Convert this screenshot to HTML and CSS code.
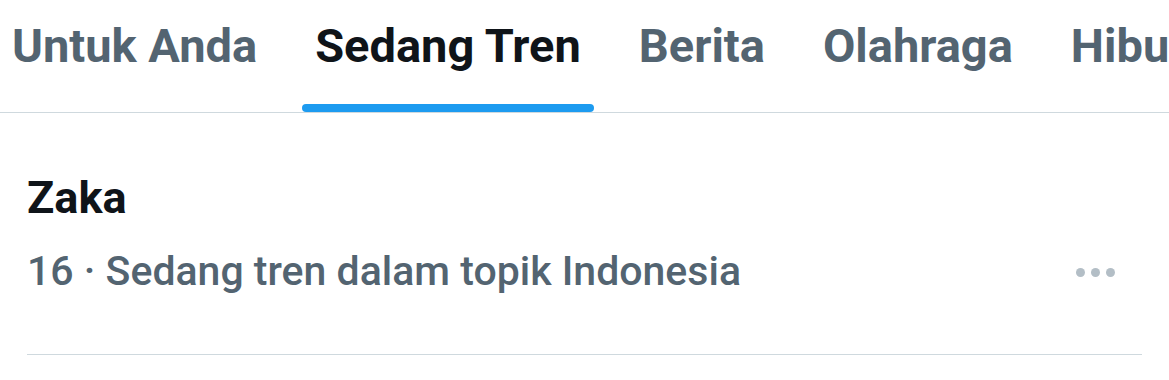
FILE: index.html
```html
<!DOCTYPE html>
<html lang="id">
<head>
    <meta charset="UTF-8">
    <meta name="viewport" content="width=device-width, initial-scale=1.0">
    <title>Jelajahi</title>
    <link rel="stylesheet" href="styles.css">
</head>
<body>
    <nav class="tabs">
        <a href="#" class="tab">Untuk Anda</a>
        <a href="#" class="tab active">Sedang Tren</a>
        <a href="#" class="tab">Berita</a>
        <a href="#" class="tab">Olahraga</a>
        <a href="#" class="tab">Hiburan</a>
    </nav>

    <div class="trend">
        <div class="trend-text">
            <div class="trend-name">Zaka</div>
            <div class="trend-meta">16 · Sedang tren dalam topik Indonesia</div>
        </div>
        <button class="more" aria-label="Lainnya">
            <span></span><span></span><span></span>
        </button>
    </div>
</body>
</html>
```

FILE: styles.css
```css
body {
    margin: 0;
    background-color: #fff;
    font-family: Roboto, "Liberation Sans", sans-serif;
    overflow: hidden;
}

.tabs {
    display: flex;
    gap: 32px;
    height: 112px;
    border-bottom: 1px solid #cfd9de;
    margin-left: -1px;
    white-space: nowrap;
    overflow: hidden;
}

.tab {
    position: relative;
    flex-shrink: 0;
    padding: 18px 13px 0;
    font-size: 47px;
    line-height: 56px;
    font-weight: 700;
    color: #536471;
    text-decoration: none;
}

.tab.active {
    color: #0f1419;
}

.tab.active::after {
    content: "";
    position: absolute;
    left: 0;
    right: 0;
    bottom: 0;
    height: 8px;
    border-radius: 4px;
    background-color: #1d9bf0;
}

.trend {
    display: flex;
    justify-content: space-between;
    margin: 0 27px;
    padding-top: 59px;
    height: 242px;
    box-sizing: border-box;
    border-bottom: 1px solid #cfd9de;
}

.trend-name {
    font-size: 45px;
    line-height: 52px;
    font-weight: 700;
    color: #0f1419;
}

.trend-meta {
    margin-top: 23px;
    font-size: 41px;
    line-height: 48px;
    font-weight: 500;
    color: #536471;
}

.more {
    display: flex;
    gap: 6px;
    align-self: flex-start;
    margin-top: 96px;
    margin-right: 27px;
    padding: 0;
    border: none;
    background: none;
    cursor: pointer;
}

.more span {
    width: 9px;
    height: 9px;
    border-radius: 50%;
    background-color: #b3bec6;
}
```
